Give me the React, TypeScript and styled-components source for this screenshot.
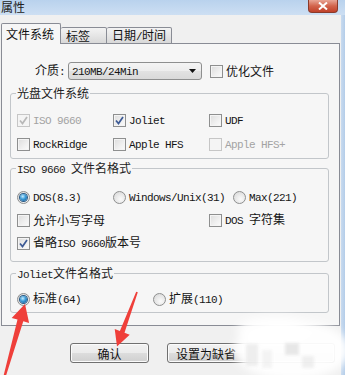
import React from "react";
import styled, { createGlobalStyle } from "styled-components";

const Global = createGlobalStyle`
  html, body { margin: 0; padding: 0; background: #f0f0f0; }
  body { font-family: "Noto Sans CJK SC", sans-serif; color: #111; }
  fieldset, legend { margin: 0; }
`;

const Win = styled.div`
  position: relative;
  width: 345px;
  height: 375px;
  overflow: hidden;
  background: #f0f0f0;
  display: flex;
  flex-direction: column;
`;

const TitleBar = styled.div`
  height: 15px;
  flex: none;
  background: linear-gradient(#b9d2ed, #cddff3);
  display: flex;
  align-items: flex-start;
  justify-content: space-between;
`;

const Title = styled.div`
  font-size: 12px;
  line-height: 13px;
  color: #222;
  padding-left: 1px;
`;

const CloseBtn = styled.div`
  width: 28px;
  height: 12px;
  margin-right: 7px;
  border: 1px solid #8a3a2a;
  border-top: none;
  border-radius: 0 0 4px 4px;
  background: linear-gradient(#e8a595, #d2644c 50%, #c0412a);
  display: flex;
  align-items: center;
  justify-content: center;
`;

const Body = styled.div`
  flex: 1;
  display: flex;
`;

const Main = styled.div`
  flex: 1;
  padding: 8px 1px 0 1px;
  display: flex;
  flex-direction: column;
`;

const RightFrame = styled.div`
  width: 4px;
  flex: none;
  background: linear-gradient(90deg, #c9dbef, #b4cde9);
`;

const TabBar = styled.div`
  display: flex;
  align-items: flex-end;
  height: 21px;
  margin-bottom: -1px;
  position: relative;
  z-index: 1;
`;

const Tab = styled.div<{ $w: number; $active?: boolean }>`
  box-sizing: border-box;
  width: ${(p) => p.$w}px;
  height: ${(p) => (p.$active ? 21 : 17)}px;
  border: 1px solid #898c95;
  border-bottom: ${(p) => (p.$active ? "none" : "1px solid #898c95")};
  border-left: ${(p) => (p.$active ? "1px solid #898c95" : "none")};
  border-radius: 2px 2px 0 0;
  background: ${(p) =>
    p.$active ? "#f6f6f6" : "linear-gradient(#f3f3f3, #e6e6e6 50%, #d8d8d8)"};
  padding-left: ${(p) => (p.$active ? 4 : 5)}px;
  display: flex;
  align-items: center;
  font-size: 12px;
  line-height: 14px;
`;

const Panel = styled.div`
  box-sizing: border-box;
  height: 283px;
  border: 1px solid #898c95;
  background: #f6f6f6;
  padding: 18px 10px 0 8px;
  display: flex;
  flex-direction: column;
`;

const TopRow = styled.div`
  height: 18px;
  display: flex;
  align-items: center;
  padding-left: 25px;
`;

const Combo = styled.div`
  box-sizing: border-box;
  width: 134px;
  height: 18px;
  margin-left: 3px;
  margin-right: 8px;
  border: 1px solid #8e8f8f;
  border-radius: 3px;
  background: linear-gradient(#f4f4f4, #ededed 50%, #e2e2e2 50%, #d9d9d9);
  display: flex;
  align-items: center;
  justify-content: space-between;
  padding: 0 5px 0 3px;
`;

const Group = styled.fieldset<{ $mt: number; $pt: number; $pb: number; $gap: number }>`
  margin-top: ${(p) => p.$mt}px;
  border: 1px solid #c2c6ca;
  border-radius: 3px;
  padding: ${(p) => p.$pt}px 0 ${(p) => p.$pb}px 6px;
  display: flex;
  flex-direction: column;
  gap: ${(p) => p.$gap}px;
  min-width: 0;
`;

const Legend = styled.legend`
  padding: 0 1px;
  margin-left: -1px;
  font-size: 12px;
  line-height: 14px;
  height: 14px;
  color: #222;
  white-space: pre;
`;

const Row = styled.div`
  display: flex;
  height: 20px;
  align-items: center;
`;

const Item = styled.div<{ $w?: number; $disabled?: boolean }>`
  ${(p) => (p.$w ? `width: ${p.$w}px; flex: none;` : "")}
  display: flex;
  align-items: center;
  gap: 3px;
  color: ${(p) => (p.$disabled ? "#a3a3a3" : "#151515")};
  font-size: 12px;
  line-height: 14px;
  white-space: pre;
`;

const Box = styled.span<{ $disabled?: boolean }>`
  box-sizing: border-box;
  width: 13px;
  height: 13px;
  flex: none;
  border: 1px solid ${(p) => (p.$disabled ? "#c6c6c6" : "#8e8f8f")};
  background: ${(p) =>
    p.$disabled
      ? "#f4f4f4"
      : "linear-gradient(135deg, #dcdcdc, #f0f0f0 60%, #fbfbfb)"};
  box-shadow: inset 0 0 0 1px #f4f4f4;
  display: flex;
  align-items: center;
  justify-content: center;
`;

const Round = styled.span`
  box-sizing: border-box;
  width: 13px;
  height: 13px;
  flex: none;
  border-radius: 50%;
  border: 1px solid #8e8f8f;
  background: radial-gradient(circle at 60% 65%, #fafafa, #e0e0e0 70%, #cfcfcf);
  display: flex;
  align-items: center;
  justify-content: center;
`;

const Dot = styled.span`
  width: 7px;
  height: 7px;
  border-radius: 50%;
  background: radial-gradient(circle at 40% 35%, #c5ecff, #3a9ad6 45%, #0d4f8c);
  box-shadow: 0 0 0 1px #2a5a85;
`;

const Label = styled.span`
  white-space: pre;
`;

const Cjk = styled.span`
  font-family: "Noto Sans CJK SC", sans-serif;
  font-size: 12px;
`;

const Latin = styled.span`
  font-family: "Liberation Mono", monospace;
  font-size: 11px;
  letter-spacing: -0.6px;
`;

const ButtonsRow = styled.div`
  display: flex;
  gap: 18px;
  padding: 17px 0 0 69px;
`;

const Button = styled.div<{ $w: number; $left?: boolean }>`
  box-sizing: border-box;
  width: ${(p) => p.$w}px;
  height: 20px;
  border: 1px solid #707070;
  border-radius: 3px;
  background: linear-gradient(#f2f2f2, #ebebeb 50%, #dddddd 50%, #cfcfcf);
  box-shadow: inset 0 0 0 1px #fbfbfb;
  display: flex;
  align-items: center;
  justify-content: ${(p) => (p.$left ? "flex-start" : "center")};
  padding-left: ${(p) => (p.$left ? 8 : 0)}px;
  font-size: 12px;
  color: #111;
`;

const Overlay = styled.svg`
  position: absolute;
  left: 0;
  top: 0;
  pointer-events: none;
`;

const CJK_RE = /([\u3000-\u9fff\uff00-\uffef]+)/;

function Txt({ s }: { s: string }) {
  const parts = s.split(CJK_RE).filter((x) => x);
  return (
    <Label>
      {parts.map((p, i) =>
        CJK_RE.test(p) ? <Cjk key={i}>{p}</Cjk> : <Latin key={i}>{p}</Latin>
      )}
    </Label>
  );
}

function Check({
  label,
  checked,
  disabled,
  w,
}: {
  label: string;
  checked?: boolean;
  disabled?: boolean;
  w?: number;
}) {
  return (
    <Item $w={w} $disabled={disabled}>
      <Box $disabled={disabled}>
        {checked && (
          <svg width="9" height="9" viewBox="0 0 9 9">
            <path
              d="M1 4.5 L3.5 7.5 L8 1"
              fill="none"
              stroke={disabled ? "#b8b8b8" : "#3d5a95"}
              strokeWidth="1.7"
            />
          </svg>
        )}
      </Box>
      <Txt s={label} />
    </Item>
  );
}

function Radio({ label, checked, w }: { label: string; checked?: boolean; w?: number }) {
  return (
    <Item $w={w}>
      <Round>{checked && <Dot />}</Round>
      <Txt s={label} />
    </Item>
  );
}

export default function App() {
  return (
    <Win>
      <Global />
      <TitleBar>
        <Title>属性</Title>
        <CloseBtn>
          <svg width="10" height="8" viewBox="0 0 10 8">
            <path d="M1 0.5 L9 7.5 M9 0.5 L1 7.5" stroke="#fff" strokeWidth="2" />
          </svg>
        </CloseBtn>
      </TitleBar>
      <Body>
        <Main>
          <TabBar>
            <Tab $w={60} $active>
              文件系统
            </Tab>
            <Tab $w={46}>标签</Tab>
            <Tab $w={65}>
              <Txt s="日期/时间" />
            </Tab>
          </TabBar>
          <Panel>
            <TopRow>
              <Item>
                <Txt s="介质:" />
              </Item>
              <Combo>
                <Item>
                  <Txt s="210MB/24Min" />
                </Item>
                <svg width="7" height="4" viewBox="0 0 7 4">
                  <path d="M0 0 H7 L3.5 4 Z" fill="#111" />
                </svg>
              </Combo>
              <Check label="优化文件" />
            </TopRow>

            <Group $mt={6} $pt={10} $pb={4} $gap={4}>
              <Legend>光盘文件系统</Legend>
              <Row>
                <Check w={96} label="ISO 9660" checked disabled />
                <Check w={96} label="Joliet" checked />
                <Check label="UDF" />
              </Row>
              <Row>
                <Check w={96} label="RockRidge" />
                <Check w={96} label="Apple HFS" />
                <Check label="Apple HFS+" disabled />
              </Row>
            </Group>

            <Group $mt={2} $pt={12} $pb={8} $gap={3}>
              <Legend>
                <Txt s="ISO 9660 文件名格式" />
              </Legend>
              <Row>
                <Radio w={96} label="DOS(8.3)" checked />
                <Radio w={120} label="Windows/Unix(31)" />
                <Radio label="Max(221)" />
              </Row>
              <Row>
                <Check w={192} label="允许小写字母" />
                <Check label="DOS 字符集" />
              </Row>
              <Row>
                <Check label="省略ISO 9660版本号" checked />
              </Row>
            </Group>

            <Group $mt={4} $pt={9} $pb={3} $gap={0}>
              <Legend>
                <Txt s="Joliet文件名格式" />
              </Legend>
              <Row>
                <Radio w={136} label="标准(64)" checked />
                <Radio label="扩展(110)" />
              </Row>
            </Group>
          </Panel>
          <ButtonsRow>
            <Button $w={79}>确认</Button>
            <Button $w={168} $left>
              设置为缺省
            </Button>
          </ButtonsRow>
        </Main>
        <RightFrame />
      </Body>

      <Overlay width="345" height="375" viewBox="0 0 345 375">
        <defs>
          <filter id="soft" x="-30%" y="-30%" width="160%" height="160%">
            <feGaussianBlur stdDeviation="4" />
          </filter>
          <filter id="soft2">
            <feGaussianBlur stdDeviation="1.5" />
          </filter>
        </defs>
        <g filter="url(#soft)">
          <ellipse cx="292" cy="350" rx="58" ry="30" fill="#ffffff" opacity="0.95" />
          <ellipse cx="275" cy="330" rx="38" ry="14" fill="#ffffff" opacity="0.9" />
        </g>
        <g filter="url(#soft2)" opacity="0.55">
          <rect x="246" y="344" width="12" height="22" fill="#e2e2e2" />
          <rect x="262" y="350" width="10" height="18" fill="#ebebeb" />
          <rect x="285" y="343" width="14" height="12" fill="#d6d6d6" />
          <rect x="302" y="356" width="12" height="12" fill="#e4e4e4" />
        </g>
        <polygon
          points="3.0,378 17.5,319.6 11.7,317.9 25,304 29.1,322.9 23.3,321.2 5.2,378.3"
          fill="#ef3f3a"
        />
        <polygon
          points="137.8,292.3 124.5,332.8 129.7,334.7 117,346.5 114.7,329.1 119.9,331 136.2,291.7"
          fill="#ef3f3a"
        />
      </Overlay>
    </Win>
  );
}
